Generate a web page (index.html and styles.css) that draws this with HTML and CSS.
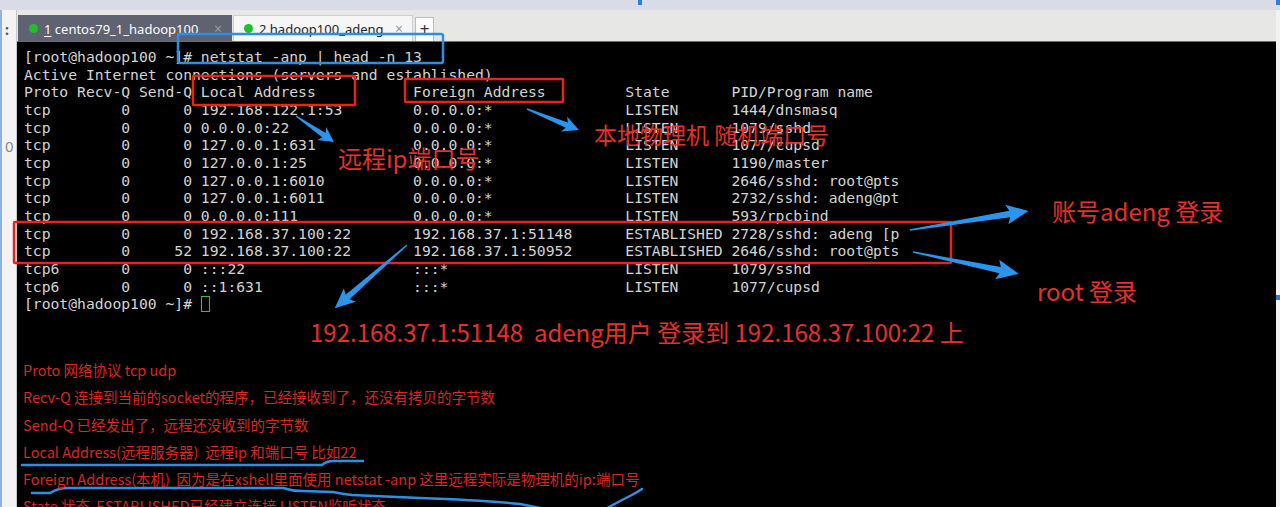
FILE: index.html
```
<!DOCTYPE html>
<html lang="zh">

<head>
    <meta charset="UTF-8">
    <title>netstat -anp</title>
    <link rel="stylesheet" href="styles.css">
</head>

<body>
    <div class="app">
        <div class="side">
            <span class="grip">:</span>
            <span class="gutter_num">0</span>
        </div>
        <div class="main">
            <div class="tabbar">
                <div class="tab active">
                    <span class="dot"></span>
                    <span class="tab_name"><u>1</u> centos79_1_hadoop100</span>
                    <span class="close">×</span>
                </div>
                <div class="tab">
                    <span class="dot"></span>
                    <span class="tab_name">2 hadoop100_adeng</span>
                    <span class="close">×</span>
                </div>
                <div class="add">+</div>
            </div>
            <div class="term">
<pre>[root@hadoop100 ~]# netstat -anp | head -n 13
Active Internet connections (servers and established)
Proto Recv-Q Send-Q Local Address           Foreign Address         State       PID/Program name
tcp        0      0 192.168.122.1:53        0.0.0.0:*               LISTEN      1444/dnsmasq
tcp        0      0 0.0.0.0:22              0.0.0.0:*               LISTEN      1079/sshd
tcp        0      0 127.0.0.1:631           0.0.0.0:*               LISTEN      1077/cupsd
tcp        0      0 127.0.0.1:25            0.0.0.0:*               LISTEN      1190/master
tcp        0      0 127.0.0.1:6010          0.0.0.0:*               LISTEN      2646/sshd: root@pts
tcp        0      0 127.0.0.1:6011          0.0.0.0:*               LISTEN      2732/sshd: adeng@pt
tcp        0      0 0.0.0.0:111             0.0.0.0:*               LISTEN      593/rpcbind
tcp        0      0 192.168.37.100:22       192.168.37.1:51148      ESTABLISHED 2728/sshd: adeng [p
tcp        0     52 192.168.37.100:22       192.168.37.1:50952      ESTABLISHED 2646/sshd: root@pts
tcp6       0      0 :::22                   :::*                    LISTEN      1079/sshd
tcp6       0      0 ::1:631                 :::*                    LISTEN      1077/cupsd
[root@hadoop100 ~]# <span class="cursor"></span></pre>
            </div>
        </div>
        <div class="edge"></div>
    </div>

    <!-- annotations drawn on top of the screenshot -->
    <div class="marks">
        <svg class="shapes" width="1280" height="507" viewBox="0 0 1280 507">
            <rect class="box_blue" x="178" y="34" width="265" height="29" rx="2" />
            <rect class="box_red" x="193" y="76" width="162" height="29" rx="1" />
            <rect class="box_red" x="405" y="79" width="158" height="23" rx="1" />
            <rect class="box_red" x="14" y="222" width="937" height="41" rx="1" />

            <g class="arrow">
                <path transform="translate(296 116) rotate(34.4)" d="M0,-0.7 L34,-2.8 L31,-8 L46,0 L31,8 L34,2.8 L0,0.7Z" />
                <path transform="translate(527 109) rotate(22)" d="M0,-0.7 L43,-2.8 L40,-8 L56,0 L40,8 L43,2.8 L0,0.7Z" />
                <path transform="translate(910 230) rotate(-9.1)" d="M0,-0.7 L101,-3.2 L98,-10 L120,0 L98,10 L101,3.2 L0,0.7Z" />
                <path transform="translate(913 252) rotate(11.7)" d="M0,-0.7 L89,-3.2 L86,-10 L108,0 L86,10 L89,3.2 L0,0.7Z" />
                <path transform="translate(407 245) rotate(138.8)" d="M0,-0.7 L79,-3 L76,-9 L96,0 L76,9 L79,3 L0,0.7Z" />
            </g>

            <path class="scribble" d="M22,465 L322,465 Q326,461 334,461 L363,461" />
            <path class="scribble" d="M32,493 L50,493 Q58,488 68,488 L283,488 Q292,491 302,491 L333,492 Q342,494 352,495 L420,498 Q480,500 520,504 L560,512" />
            <path class="scribble" d="M600,512 Q618,502 628,497 Q636,493 642,489" />
        </svg>

        <div class="label big" style="left: 338px; top: 146px;">远程ip端口号</div>
        <div class="label mid" style="left: 594px; top: 123px;">本地物理机 随机端口号</div>
        <div class="label big" style="left: 1052px; top: 199px;">账号adeng 登录</div>
        <div class="label big" style="left: 1037px; top: 279px;">root 登录</div>
        <div class="label big" style="left: 310px; top: 320px;">192.168.37.1:51148&nbsp;&nbsp;adeng用户 登录到 192.168.37.100:22 上</div>

        <div class="notes">
            <p>Proto 网络协议 tcp udp</p>
            <p>Recv-Q 连接到当前的socket的程序，已经接收到了，还没有拷贝的字节数</p>
            <p>Send-Q 已经发出了，远程还没收到的字节数</p>
            <p>Local Address(远程服务器)&nbsp;&nbsp;远程ip 和端口号 比如22</p>
            <p>Foreign Address(本机)&nbsp;&nbsp;因为是在xshell里面使用 netstat -anp 这里远程实际是物理机的ip:端口号</p>
            <p>State 状态&nbsp;&nbsp;ESTABLISHED已经建立连接 LISTEN监听状态</p>
        </div>

        <span class="handle" style="left: 638px; top: 0px;"></span>
        <span class="handle" style="left: 1276px; top: 0px;"></span>
        <span class="handle" style="left: 1276px; top: 295px;"></span>
    </div>
</body>

</html>
```

FILE: styles.css
```
* {
    box-sizing: border-box;
}

body {
    margin: 0;
    width: 1280px;
    height: 507px;
    overflow: hidden;
    position: relative;
    background-color: #e7e7e6;
    font-family: "Noto Sans", "Noto Sans CJK SC", sans-serif;
}

.app {
    display: flex;
    height: 507px;
    border-top: 10px solid #d9dbe6;
}

.side {
    width: 17px;
    display: flex;
    flex-direction: column;
    align-items: flex-start;
    padding: 12px 0 0 3px;
    background-color: #f3f3f3;
    border-left: 2px solid #8fb2e4;
    border-right: 1px solid #c9c9c9;
    color: #555;
}

.grip {
    font-size: 14px;
    line-height: 16px;
    font-weight: bold;
}

.gutter_num {
    margin-top: 98px;
    font-size: 15px;
    color: #888;
}

.main {
    flex: 1;
    display: flex;
    flex-direction: column;
}

.tabbar {
    height: 32px;
    display: flex;
    align-items: flex-end;
    padding-left: 1px;
    border-bottom: 1px solid #6d6d6d;
}

.tab {
    height: 26px;
    display: flex;
    align-items: center;
    padding: 0 9px 0 10px;
    margin-right: 1px;
    background-color: #f6f6f6;
    border: 1px solid #cfcfcf;
    border-bottom: none;
    font-size: 13px;
    color: #1e1e1e;
}

.tab.active {
    width: 214px;
    background-color: #5e6271;
    border-color: #5e6271;
    color: #fff;
}

.tab:not(.active) {
    width: 180px;
}

.dot {
    width: 9px;
    height: 9px;
    border-radius: 50%;
    background-color: #20c02a;
    margin-right: 6px;
}

.tab_name {
    flex: 1;
    white-space: nowrap;
}

.tab_name u {
    text-underline-offset: 2px;
}

.close {
    color: #9a9aa2;
    font-size: 14px;
}

.add {
    width: 19px;
    height: 24px;
    margin-left: 1px;
    background-color: #fdfdfd;
    border: 1px solid #bdbdbd;
    border-bottom: none;
    text-align: center;
    font-size: 17px;
    line-height: 22px;
    color: #333;
}

.term {
    flex: 1;
    background-color: #000;
    padding: 6px 0 0 7px;
}

.term pre {
    margin: 0;
    font-family: "DejaVu Sans Mono", monospace;
    font-size: 14.7px;
    line-height: 17.65px;
    color: #d4d4d4;
}

.cursor {
    display: inline-block;
    width: 9px;
    height: 16px;
    border: 1.5px solid #3bbf3b;
    vertical-align: -3px;
}

.edge {
    width: 4px;
    background-color: #f2f2f2;
}

/* annotation layer */
.marks {
    position: absolute;
    left: 0;
    top: 0;
    width: 1280px;
    height: 507px;
    pointer-events: none;
}

.shapes {
    position: absolute;
    left: 0;
    top: 0;
}

.box_blue {
    fill: none;
    stroke: #2a8fe6;
    stroke-width: 2.5;
}

.box_red {
    fill: none;
    stroke: #e8231c;
    stroke-width: 2.5;
}

.arrow path {
    fill: #2b95ec;
}

.scribble {
    fill: none;
    stroke: #2f8fe4;
    stroke-width: 2.5;
    stroke-linecap: round;
    stroke-linejoin: round;
}

.label {
    position: absolute;
    white-space: nowrap;
    line-height: 1;
    color: #e6302a;
    font-family: "Noto Sans CJK SC", sans-serif;
}

.big {
    font-size: 24px;
}

.mid {
    font-size: 23px;
}

.notes {
    position: absolute;
    left: 23px;
    top: 356px;
    color: #d8271f;
    font-family: "Noto Sans CJK SC", sans-serif;
    font-size: 14.5px;
}

.notes p {
    margin: 0;
    height: 27.3px;
    line-height: 27.3px;
    white-space: nowrap;
}

.handle {
    position: absolute;
    width: 4px;
    height: 5px;
    background-color: #2a7fe0;
}
```
